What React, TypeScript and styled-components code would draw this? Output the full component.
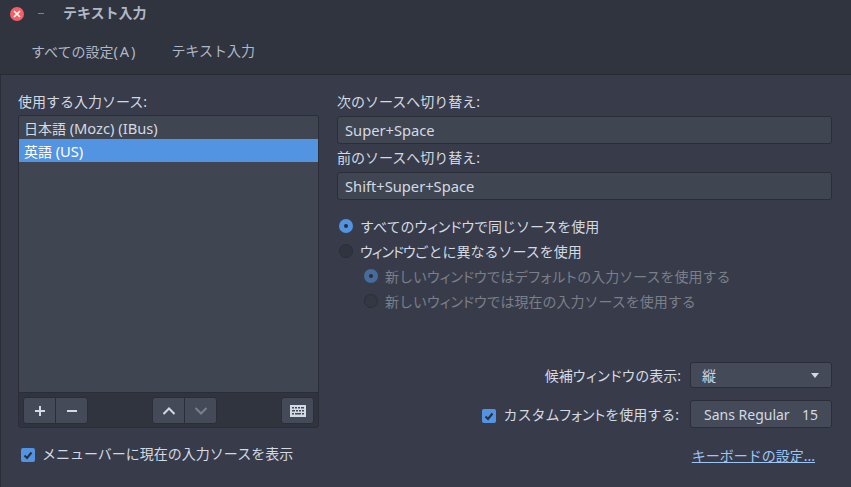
import { createGlobalStyle } from "styled-components";
import styled from "styled-components";

const GlobalStyle = createGlobalStyle`
  html, body {
    margin: 0;
    padding: 0;
    background: #383c4a;
  }
  body {
    font-family: "Noto Sans", "Noto Sans CJK JP", sans-serif;
    font-size: 14px;
    color: #d3dae3;
  }
`;

const Window = styled.div`
  width: 851px;
  height: 487px;
  overflow: hidden;
  display: flex;
  flex-direction: column;
`;

const Header = styled.header`
  height: 75px;
  box-sizing: border-box;
  background: #2f343f;
  border-bottom: 1px solid #262a33;
  padding: 0 10px;
  display: flex;
  flex-direction: column;
`;

const TitleRow = styled.div`
  height: 28px;
  display: flex;
  align-items: center;
  font-weight: 700;
  font-size: 14px;
  color: #afb8c6;
`;

const WindowTitle = styled.span`
  margin-bottom: 3px;
`;

const CloseButton = styled.span`
  width: 14px;
  height: 14px;
  border-radius: 50%;
  background: #f46067;
  display: flex;
  align-items: center;
  justify-content: center;
`;

const Minimize = styled.span`
  width: 6px;
  height: 1px;
  background: #7b818d;
  margin: 0 19px 0 14px;
`;

const Breadcrumbs = styled.nav`
  margin-top: 2px;
  padding-left: 21px;
  display: flex;
  gap: 34px;
  line-height: 44px;
  color: #afb8c6;
`;

// Latin text runs a little wider than the kana around it
const Latin = styled.span`
  font-size: 14.7px;
`;

const Accel = styled(Latin)`
  letter-spacing: 1.9px;
`;

// katakana words that sit tighter than plain full-width kana
const Tight = styled.span<{ $track?: number }>`
  font-feature-settings: "palt";
  letter-spacing: ${(p) => p.$track ?? 0}px;
`;

const Body = styled.main`
  flex: 1;
  border-left: 1px solid #2b2e39;
  padding: 17px 19px 0 17px;
  display: grid;
  grid-template-columns: 301px 1fr;
  column-gap: 18px;
`;

const LeftColumn = styled.section`
  display: flex;
  flex-direction: column;
`;

const Label = styled.div`
  height: 23px;
  line-height: 20px;
`;

const FieldLabel = styled(Label)`
  height: 24px;
`;

const ListFrame = styled.div`
  height: 313px;
  box-sizing: border-box;
  border: 1px solid #2b2e39;
  border-radius: 3px;
  background: #2f343f;
  display: flex;
  flex-direction: column;
  overflow: hidden;
`;

const SourceList = styled.ul`
  flex: 1;
  margin: 0;
  padding: 0;
  list-style: none;
  background: #404552;
  border-bottom: 1px solid #2b2e39;
`;

const SourceItem = styled.li<{ $selected?: boolean }>`
  height: 23px;
  line-height: 25px;
  padding-left: 5px;
  color: ${(p) => (p.$selected ? "#ffffff" : "#d3dae3")};
  background: ${(p) => (p.$selected ? "#5294e2" : "transparent")};
`;

const Toolbar = styled.div`
  height: 34px;
  flex-shrink: 0;
  padding: 4px 4px 0;
  box-sizing: border-box;
  display: flex;
  justify-content: space-between;
  align-items: flex-start;
`;

const ButtonGroup = styled.div`
  display: flex;
  border: 1px solid #2b2e39;
  border-radius: 3px;
  background: #444a58;
  overflow: hidden;
`;

const ToolButton = styled.button`
  width: 31px;
  height: 25px;
  padding: 0;
  border: 0;
  background: transparent;
  display: flex;
  align-items: center;
  justify-content: center;
  & + & {
    width: 32px;
    border-left: 1px solid #2b2e39;
  }
`;

const CheckRow = styled.label`
  display: flex;
  align-items: center;
  gap: 7px;
`;

const ShowCurrentRow = styled(CheckRow)`
  margin: 15px 0 0 3px;
`;

const CheckBox = styled.span`
  width: 14px;
  height: 14px;
  margin-top: 4px;
  border-radius: 2px;
  background: #5294e2;
  display: flex;
  align-items: center;
  justify-content: center;
`;

const RightColumn = styled.section`
  display: flex;
  flex-direction: column;
`;

const KeyField = styled.div`
  height: 28px;
  box-sizing: border-box;
  border: 1px solid #2b2e39;
  border-radius: 3px;
  background: #404552;
  padding-left: 7px;
  line-height: 27px;
  color: #d3dae3;
  margin-bottom: 4px;
`;

const RadioGroup = styled.div`
  margin-top: 12px;
  display: flex;
  flex-direction: column;
  gap: 5px;
`;

const RadioRow = styled.div<{ $nested?: boolean; $disabled?: boolean }>`
  height: 20px;
  display: flex;
  align-items: center;
  gap: 7px;
  padding-left: ${(p) => (p.$nested ? "27px" : "2px")};
  color: ${(p) => (p.$disabled ? "#7a7f8b" : "#d3dae3")};
`;

const Radio = styled.span<{ $checked?: boolean; $disabled?: boolean }>`
  width: 14px;
  height: 14px;
  box-sizing: border-box;
  border-radius: 50%;
  flex-shrink: 0;
  display: flex;
  align-items: center;
  justify-content: center;
  background: ${(p) =>
    p.$checked ? (p.$disabled ? "#466b9c" : "#5294e2") : p.$disabled ? "#343843" : "#2f343f"};
  border: 1px solid ${(p) => (p.$checked ? "transparent" : "#2b2e39")};
  &::after {
    content: "";
    display: ${(p) => (p.$checked ? "block" : "none")};
    width: 4px;
    height: 4px;
    border-radius: 50%;
    background: #2b2e39;
  }
`;

const OptionsGrid = styled.div`
  margin-top: auto;
  margin-bottom: 22px;
  display: grid;
  grid-template-columns: 1fr 142px;
  column-gap: 9px;
  row-gap: 12px;
  align-items: center;
`;

const RightLabel = styled.div`
  justify-self: end;
`;

const CustomFontLabel = styled(RightLabel)`
  margin-right: 2px;
`;

const ComboBox = styled.div`
  height: 26px;
  box-sizing: border-box;
  border: 1px solid #2b2e39;
  border-radius: 3px;
  background: #444a58;
  padding: 0 12px 0 11px;
  display: flex;
  align-items: center;
  justify-content: space-between;
`;

const Caret = styled.span`
  width: 0;
  height: 0;
  border-left: 4.5px solid transparent;
  border-right: 4.5px solid transparent;
  border-top: 5px solid #d3dae3;
`;

const FontButton = styled.div`
  height: 28px;
  box-sizing: border-box;
  border: 1px solid #2b2e39;
  border-radius: 3px;
  background: #444a58;
  padding: 0 13px;
  display: flex;
  align-items: center;
  justify-content: space-between;
`;

const LinkRow = styled.div`
  grid-column: 1 / -1;
  justify-self: end;
  margin: 5px 17px 0 0;
`;

const KeyboardLink = styled.a`
  color: #9dc6f5;
  text-decoration: underline;
`;

const Tick = () => (
  <svg width="10" height="9" viewBox="0 0 10 9">
    <path d="M1.5 4.5 L4 7 L8.5 1.5" fill="none" stroke="#2b2e39" strokeWidth="2" />
  </svg>
);

export default function App() {
  return (
    <Window>
      <GlobalStyle />
      <Header>
        <TitleRow>
          <CloseButton>
            <svg width="8" height="8" viewBox="0 0 8 8">
              <path d="M1 1 L7 7 M7 1 L1 7" stroke="#ffffff" strokeWidth="1.6" />
            </svg>
          </CloseButton>
          <Minimize />
          <WindowTitle>テキスト入力</WindowTitle>
        </TitleRow>
        <Breadcrumbs>
          <span>
            すべての設定<Accel>(A)</Accel>
          </span>
          <span>テキスト入力</span>
        </Breadcrumbs>
      </Header>
      <Body>
        <LeftColumn>
          <Label>使用する入力ソース:</Label>
          <ListFrame>
            <SourceList>
              <SourceItem>
                日本語 <Latin>(Mozc) (IBus)</Latin>
              </SourceItem>
              <SourceItem $selected>
                英語 <Latin>(US)</Latin>
              </SourceItem>
            </SourceList>
            <Toolbar>
              <ButtonGroup>
                <ToolButton>
                  <svg width="12" height="12" viewBox="0 0 12 12">
                    <path d="M6 1 V11 M1 6 H11" stroke="#d3dae3" strokeWidth="2" />
                  </svg>
                </ToolButton>
                <ToolButton>
                  <svg width="12" height="12" viewBox="0 0 12 12">
                    <path d="M1 6 H11" stroke="#d3dae3" strokeWidth="2" />
                  </svg>
                </ToolButton>
              </ButtonGroup>
              <ButtonGroup>
                <ToolButton>
                  <svg width="14" height="10" viewBox="0 0 14 10">
                    <path d="M1.5 8 L7 2.5 L12.5 8" fill="none" stroke="#d3dae3" strokeWidth="2" />
                  </svg>
                </ToolButton>
                <ToolButton>
                  <svg width="14" height="10" viewBox="0 0 14 10">
                    <path d="M1.5 2 L7 7.5 L12.5 2" fill="none" stroke="#7a7f8b" strokeWidth="2" />
                  </svg>
                </ToolButton>
              </ButtonGroup>
              <ButtonGroup>
                <ToolButton>
                  <svg width="16" height="12" viewBox="0 0 16 12">
                    <path
                      fillRule="evenodd"
                      fill="#d3dae3"
                      d="M0 0 H16 V12 H0 Z M2 2 V3.5 H4 V2 Z M5 2 V3.5 H7 V2 Z M8 2 V3.5 H10 V2 Z M11 2 V3.5 H14 V2 Z M2 5 V6.5 H5 V5 Z M6 5 V6.5 H8 V5 Z M9 5 V6.5 H11 V5 Z M12 5 V6.5 H14 V5 Z M2 8 V9.5 H4 V8 Z M5 8 V9.5 H11 V8 Z M12 8 V9.5 H14 V8 Z"
                    />
                  </svg>
                </ToolButton>
              </ButtonGroup>
            </Toolbar>
          </ListFrame>
          <ShowCurrentRow>
            <CheckBox>
              <Tick />
            </CheckBox>
            メニューバーに現在の入力ソースを表示
          </ShowCurrentRow>
        </LeftColumn>
        <RightColumn>
          <FieldLabel>次のソースへ切り替え:</FieldLabel>
          <KeyField>
            <Latin>Super+Space</Latin>
          </KeyField>
          <FieldLabel>前のソースへ切り替え:</FieldLabel>
          <KeyField>
            <Latin>Shift+Super+Space</Latin>
          </KeyField>
          <RadioGroup>
            <RadioRow>
              <Radio $checked />
              <span>
                すべての<Tight>ウィンドウ</Tight>で同じソースを使用
              </span>
            </RadioRow>
            <RadioRow>
              <Radio />
              <span>
                <Tight $track={-1}>ウィンドウ</Tight>ごとに異なるソースを使用
              </span>
            </RadioRow>
            <RadioRow $nested $disabled>
              <Radio $checked $disabled />
              <span>
                新しい<Tight>ウィンドウ</Tight>では<Tight $track={0.6}>デフォルト</Tight>の入力ソースを使用する
              </span>
            </RadioRow>
            <RadioRow $nested $disabled>
              <Radio $disabled />
              <span>
                新しい<Tight>ウィンドウ</Tight>では現在の入力ソースを使用する
              </span>
            </RadioRow>
          </RadioGroup>
          <OptionsGrid>
            <RightLabel>
              候補<Tight $track={0.6}>ウィンドウ</Tight>の表示:
            </RightLabel>
            <ComboBox>
              縦
              <Caret />
            </ComboBox>
            <CustomFontLabel>
              <CheckRow>
                <CheckBox>
                  <Tick />
                </CheckBox>
                <span>
                  カスタム<Tight>フォント</Tight>を使用する:
                </span>
              </CheckRow>
            </CustomFontLabel>
            <FontButton>
              <span>Sans Regular</span>
              <span>15</span>
            </FontButton>
            <LinkRow>
              <KeyboardLink href="#">キーボードの設定...</KeyboardLink>
            </LinkRow>
          </OptionsGrid>
        </RightColumn>
      </Body>
    </Window>
  );
}
